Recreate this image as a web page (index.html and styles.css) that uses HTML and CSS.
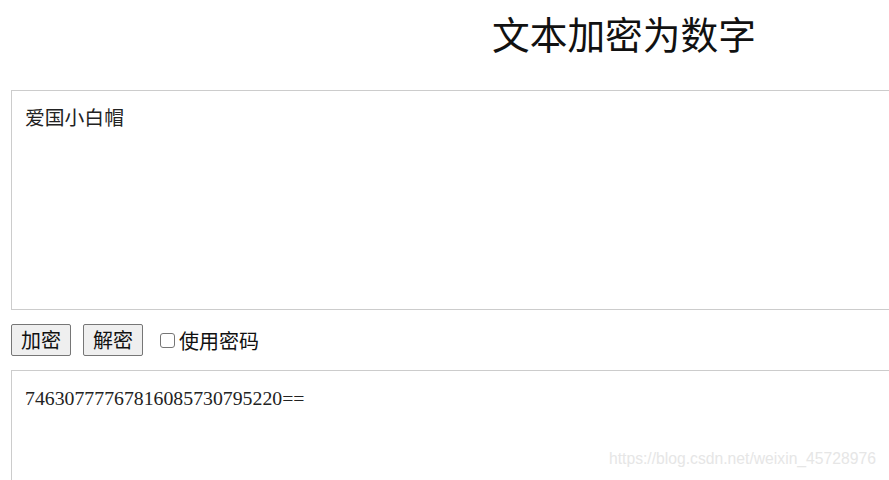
FILE: index.html
```html
<!DOCTYPE html>
<html>
<head>
<meta charset="utf-8">
<link rel="stylesheet" href="styles.css">
</head>
<body>
<div class="page">
  <h1 class="title">文本加密为数字</h1>
  <textarea class="box">爱国小白帽</textarea>
  <div class="controls">
    <button class="btn">加密</button>
    <button class="btn">解密</button>
    <label class="check"><span class="cb"></span>使用密码</label>
  </div>
  <textarea class="box">74630777767816085730795220==</textarea>
</div>
<div class="watermark">https://blog.csdn.net/weixin_45728976</div>
</body>
</html>
```
FILE: styles.css
```css
html, body {
  margin: 0;
  padding: 0;
  overflow: hidden;
  background: #fff;
  width: 889px;
  height: 480px;
}
.page {
  padding-left: 11px;
  width: 1300px;
}
.title {
  margin: 0;
  padding-left: 481px;
  height: 66px;
  line-height: 66px;
  font-family: "Noto Sans CJK SC", sans-serif;
  font-weight: normal;
  font-size: 37.7px;
  color: #111;
}
.box {
  display: block;
  box-sizing: border-box;
  margin-top: 24px;
  width: 1200px;
  height: 220px;
  padding: 14px 13px 10px;
  border: 1px solid #cccccc;
  font-family: "Liberation Serif", "Noto Sans CJK SC", serif;
  font-size: 19.8px;
  line-height: 26px;
  color: #222;
  resize: none;
  outline: none;
}
.box:last-child {
  margin-top: 14px;
}
.controls {
  display: flex;
  align-items: center;
  gap: 12px;
  margin-top: 14px;
  height: 32px;
}
.btn {
  box-sizing: border-box;
  width: 60px;
  height: 32px;
  padding: 0;
  border: 1px solid #767676;
  border-radius: 2px;
  background: #efefef;
  font-family: "Noto Sans CJK SC", sans-serif;
  font-size: 20px;
  line-height: 28px;
  color: #111;
}
.check {
  display: flex;
  align-items: center;
  margin-left: 5px;
  font-family: "Noto Sans CJK SC", sans-serif;
  font-size: 20px;
  color: #111;
}
.cb {
  box-sizing: border-box;
  width: 15px;
  height: 15px;
  border: 1px solid #767676;
  border-radius: 3px;
  margin-right: 4px;
  background: #fff;
}
.watermark {
  position: absolute;
  left: 609px;
  top: 450px;
  font-family: "Liberation Sans", Arial, sans-serif;
  font-size: 15.7px;
  color: #e6e6e6;
}
```
